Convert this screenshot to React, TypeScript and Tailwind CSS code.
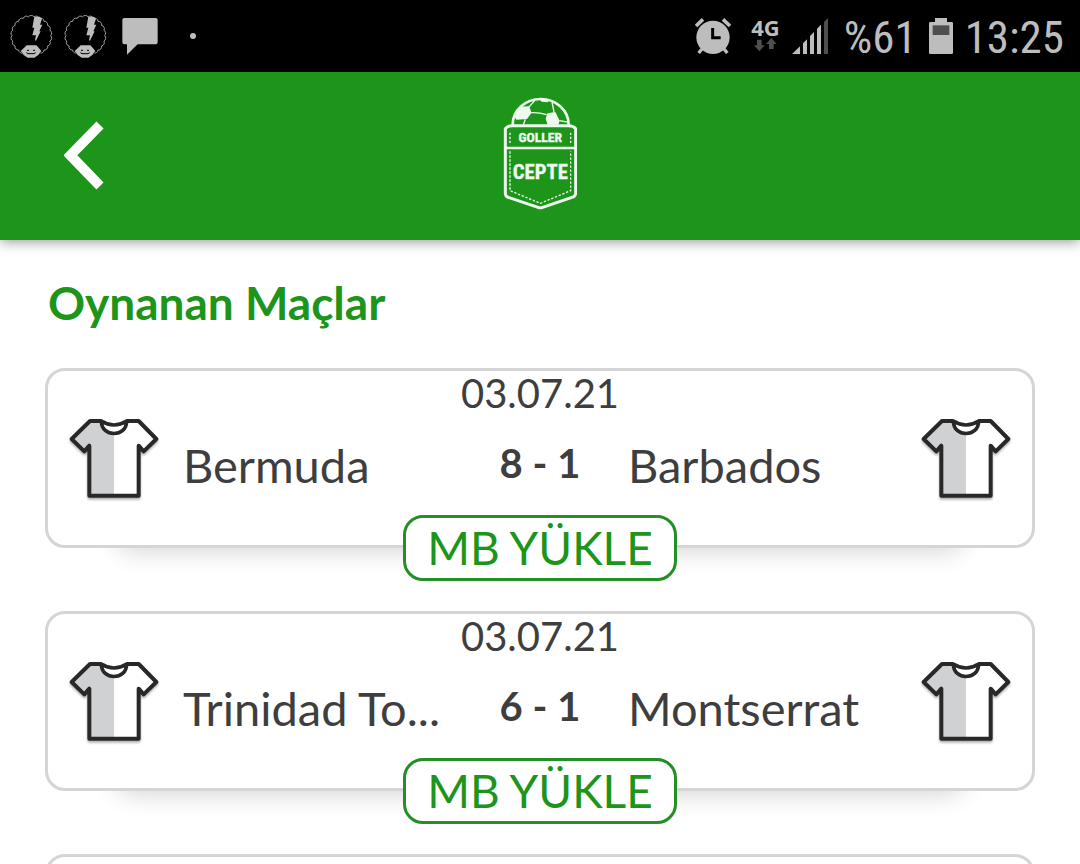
import type { ReactNode } from 'react';

type Match = {
  date: string;
  home: string;
  away: string;
  score: string;
};

const matches: Match[] = [
  { date: '03.07.21', home: 'Bermuda', away: 'Barbados', score: '8 - 1' },
  { date: '03.07.21', home: 'Trinidad To...', away: 'Montserrat', score: '6 - 1' },
];

// curly hair outline: small arcs around a circle
const CURLS = 22;
const hair = Array.from({ length: CURLS + 1 }, (_, i) => {
  const a = (i / CURLS) * Math.PI * 2;
  const x = 96 + 58 * Math.cos(a);
  const y = 105 + 57 * Math.sin(a);
  return i === 0 ? `M${x} ${y}` : `A10 10 0 0 1 ${x} ${y}`;
}).join('');

function AfroIcon() {
  return (
    <svg viewBox="32 43 129 129" className="h-[43px] w-[43px]" aria-hidden="true">
      <path d={hair} fill="none" stroke="#bdbdbd" strokeWidth="2.5" />
      <path d="M105 48h16l7 6-6 18h7l-9 20h4l-14 28-3-1 3-15h-11l6-23h-6z" fill="#bdbdbd" />
      <path d="M68 156h56v18H68z" fill="#000" />
      <path d="M64 151l13-12 5-5h29l5 5 10 12-9 12-12 8H85l-12-8z" fill="#bdbdbd" />
      <path d="M83 149h6M101 149h6M81 156l5 3h18l5-3" fill="none" stroke="#000" strokeWidth="3" />
    </svg>
  );
}

function MessageIcon() {
  return (
    <svg viewBox="366 52 108 114" className="h-[38px] w-9" aria-hidden="true">
      <path d="M373 55h94q6 0 6 6v67q0 6-6 6h-54l-32 31v-31h-8q-6 0-6-6V61q0-6 6-6z" fill="#bdbdbd" />
    </svg>
  );
}

function AlarmIcon() {
  return (
    <svg viewBox="39 54 108 108" className="h-9 w-9" aria-hidden="true">
      <circle cx="93" cy="112" r="50" fill="#bdbdbd" />
      <path d="M42 78l21-20M144 78l-21-20" stroke="#bdbdbd" strokeWidth="11" />
      <path d="M60 147l-10 12M126 147l10 12" stroke="#bdbdbd" strokeWidth="10" />
      <path d="M92 84v29h24" fill="none" stroke="#000" strokeWidth="9" />
    </svg>
  );
}

function DataArrows() {
  return (
    <svg viewBox="222 117 69 45" className="h-[15px] w-[23px]" aria-hidden="true">
      <path d="M231 125h14v17h9l-16 18-16-18h9zM267 153h14v-15h9l-16-18-16 18h9z" fill="#4f4f4f" />
    </svg>
  );
}

function SignalIcon() {
  return (
    <svg viewBox="342 51 108 108" className="h-9 w-9" aria-hidden="true">
      <path d="M342 159l24-23v23zM375 127l12-12v44h-12zM396 105l12-12v66h-12zM417 83l12-12v88h-12z" fill="#bdbdbd" />
      <path d="M438 63l12-12v108h-12z" fill="#4f4f4f" />
    </svg>
  );
}

function BatteryIcon() {
  return (
    <svg viewBox="744 54 72 108" className="h-9 w-6" aria-hidden="true">
      <path d="M762 54h36v12h14q4 0 4 4v88q0 4-4 4h-64q-4 0-4-4V70q0-4 4-4h14z" fill="#bdbdbd" />
      <path d="M755 76h50v29h-50z" fill="#4f4f4f" />
    </svg>
  );
}

function Logo() {
  return (
    <svg viewBox="69 48 222 360" className="h-[120px] w-[74px]" role="img" aria-label="Goller Cepte">
      <g stroke="#effaef" fill="none">
        <path d="M98 134a84 77 0 0 1 168 0" strokeWidth="8" />
        <path d="M154 98q24-1 46 6M146 82l18-20M222 96l-6-30M136 118l-6 16M238 122l24 4" strokeWidth="4" />
        <path d="M96 137h170q14 0 21 9v193q0 8-7 12l-92 31q-7 3-14 0l-92-31q-6-3-6-12V146q7-9 20-9z" strokeWidth="9" />
        <path d="M76 204h211" strokeWidth="7" />
        <path d="M90 158v36M272 158v36M90 214v118l91 38 91-38V214" strokeWidth="4" strokeDasharray="7 5" />
      </g>
      <path d="M120 80l27-1 8 19-14 19-32 2-6-10zM202 100l24-4 13 26-4 12h-32l-6-17zM178 58l28 3-3 6-18-2z" fill="#effaef" />
      <g fill="#effaef" stroke="#effaef" textAnchor="middle" className="font-['Roboto_Condensed','Liberation_Sans_Narrow','Liberation_Sans',sans-serif] font-bold">
        <text x="181" y="185" fontSize="41" strokeWidth="1">GOLLER</text>
        <text x="181" y="297" fontSize="62" strokeWidth="1">CEPTE</text>
      </g>
    </svg>
  );
}

function Shirt() {
  return (
    <svg viewBox="117 168 270 258" className="h-[86px] w-[90px] drop-shadow-[0_2px_1px_rgba(0,0,0,0.3)]" aria-hidden="true">
      <path d="M180 183L125 237l38 37 15-17v150h148V257l15 17 38-37-53-54h-36q-38 50-74 0z" fill="#fff" />
      <path d="M180 183L125 237l38 37 15-17v150h74V222q-28-2-36-39z" fill="#d0d1d3" />
      <path
        d="M214 183h-34l-55 54 38 37 15-17v150h148V257l15 17 38-37-53-54h-36"
        fill="none"
        stroke="#282828"
        strokeWidth="12"
        strokeLinejoin="round"
      />
      <path d="M214 183q38 24 76 0c0 50-76 50-76 0z" fill="#fff" stroke="#282828" strokeWidth="11" strokeLinejoin="round" />
    </svg>
  );
}

function Card({ children }: { children?: ReactNode }) {
  return (
    <div className="relative w-full">
      <div className="absolute inset-x-[70px] bottom-0 h-10 rounded-[50px] shadow-[0_4px_24px_rgba(0,0,0,0.16)]" />
      <div className="relative min-h-[180px] rounded-[20px] border-[3px] border-[#d5d5d5] bg-white">{children}</div>
    </div>
  );
}

function MatchCard({ match }: { match: Match }) {
  return (
    <article className="flex flex-col items-center">
      <Card>
        <p className="pt-px text-center text-[40px] leading-[42px]">{match.date}</p>
        <div className="grid h-[90px] grid-cols-[90px_1fr_120px_1fr_90px] items-center px-[21px]">
          <Shirt />
          <span className="truncate pt-3 pl-6 text-[47px] leading-[56px]">{match.home}</span>
          <strong className="pt-2 text-center text-[40px] leading-[48px] font-bold">{match.score}</strong>
          <span className="truncate pt-3 pl-7 text-[47px] leading-[56px]">{match.away}</span>
          <Shirt />
        </div>
      </Card>
      <button className="relative -mt-[33px] h-[66px] rounded-[20px] border-[3px] border-[#258e25] bg-white px-[21px] text-[46px] leading-[60px] text-[#1c951a]">
        MB YÜKLE
      </button>
    </article>
  );
}

export default function App() {
  return (
    <div className="h-screen overflow-hidden bg-white font-[Lato,sans-serif] text-[#3e3e3e]">
      <div className="flex h-[72px] items-center justify-between bg-black pr-4 pl-[10px] font-[Roboto,sans-serif] text-[#bdbdbd]">
        <div className="flex items-center gap-[11px]">
          <AfroIcon />
          <AfroIcon />
          <div className="flex items-center gap-8 pl-1">
            <MessageIcon />
            <span className="h-1.5 w-1.5 rounded-full bg-[#bdbdbd]" />
          </div>
        </div>
        <div className="flex items-center gap-3 font-['Roboto_Condensed','Liberation_Sans_Narrow',Roboto,sans-serif] text-[45px] leading-[56px]">
          <AlarmIcon />
          <div className="flex flex-col items-center pb-1 pl-2 font-['Noto_Sans',sans-serif] text-[22px] leading-[20px] font-bold">
            4G
            <DataArrows />
          </div>
          <SignalIcon />
          <span className="pt-1 pl-1">%61</span>
          <BatteryIcon />
          <time className="pt-1">13:25</time>
        </div>
      </div>

      <header className="relative grid h-[168px] grid-cols-3 items-center bg-[#1c951a] px-16 shadow-[0_2px_12px_rgba(0,0,0,0.4)]">
        <button aria-label="Geri" className="w-10">
          <svg viewBox="72 63 120 210" className="h-[70px] w-10" aria-hidden="true">
            <path d="M180 75L91 166l89 92" fill="none" stroke="#fff" strokeWidth="30" />
          </svg>
        </button>
        <div className="flex justify-center">
          <Logo />
        </div>
      </header>

      <main className="px-[45px] pt-[33px]">
        <h1 className="mb-[35px] px-[3px] text-[46px] leading-[60px] font-bold text-[#1c951a]">Oynanan Maçlar</h1>
        <div className="flex flex-col gap-[30px]">
          {matches.map((match) => (
            <MatchCard key={match.home} match={match} />
          ))}
          <Card />
        </div>
      </main>
    </div>
  );
}
